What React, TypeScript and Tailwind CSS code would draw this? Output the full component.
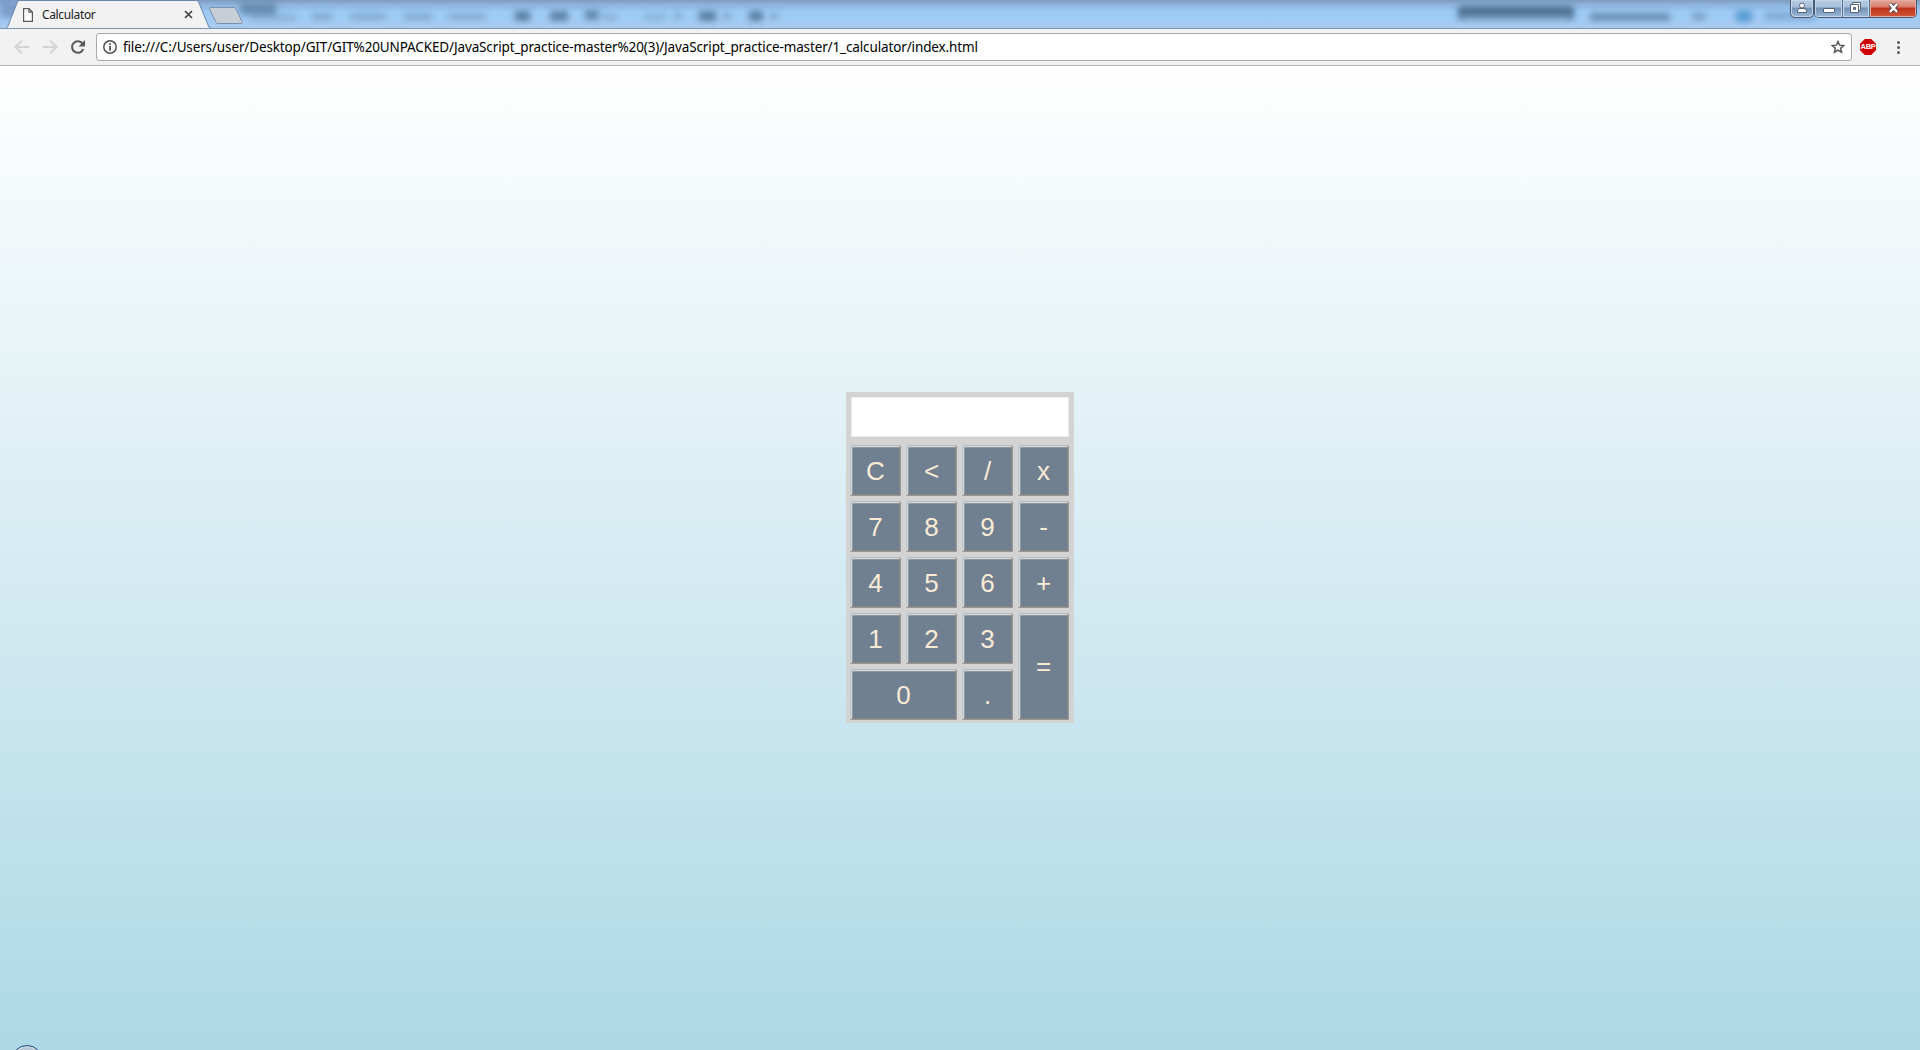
import React from "react";

type Key = { label: string; cls?: string };

const keys: Key[] = [
  { label: "C" }, { label: "<" }, { label: "/" }, { label: "x" },
  { label: "7" }, { label: "8" }, { label: "9" }, { label: "-" },
  { label: "4" }, { label: "5" }, { label: "6" }, { label: "+" },
  { label: "1" }, { label: "2" }, { label: "3" }, { label: "=", cls: "row-span-2 pb-px" },
  { label: "0", cls: "col-span-2 pt-px" }, { label: "." },
];

// Blurred shapes of the window behind the glass title bar: [left, top, width, height, opacity]
const smudges: number[][] = [
  [240, 3, 36, 12, 0.6], [250, 14, 46, 7, 0.25], [312, 13, 20, 7, 0.36], [350, 13, 36, 7, 0.32],
  [404, 13, 28, 7, 0.32], [448, 13, 38, 7, 0.3], [515, 11, 15, 10, 0.8], [550, 11, 18, 10, 0.75],
  [585, 10, 14, 10, 0.7], [603, 14, 14, 6, 0.3], [644, 14, 22, 6, 0.28], [674, 13, 8, 6, 0.35],
  [699, 11, 17, 10, 0.8], [723, 13, 8, 6, 0.4], [749, 11, 14, 10, 0.8], [770, 13, 8, 6, 0.4],
  [1590, 13, 80, 8, 0.65], [1692, 13, 14, 7, 0.45],
];

function TitleBar() {
  return (
    <header className="relative flex h-[29px] overflow-hidden border-b border-[#7896b6] bg-[linear-gradient(#7d9cc0_0px,#8eb4dc_5px,#9ccbf5_12px,#a0cbf5_18px,#a9caf0_28px)]">
      <div className="absolute inset-0 blur-[3px]">
        {smudges.map(([left, top, width, height, opacity], i) => (
          <div key={i} className="absolute bg-[#496b8d]" style={{ left, top, width, height, opacity }} />
        ))}
        <div className="absolute left-[1458px] top-[6px] h-[14px] w-[116px] rounded-sm border-x-4 border-t-8 border-[#4b6b8a] bg-[#6f92b6]" />
        <div className="absolute left-[1735px] top-[10px] h-[12px] w-[18px] rounded-full bg-[#5a9bd0]" />
        <div className="absolute left-[1765px] top-[12px] h-[8px] w-[50px] bg-[#7fa8d4]" />
        <div className="absolute left-0 top-0 h-[18px] w-[20px] bg-[#7d9cca]" />
      </div>
      <svg className="absolute left-0 top-0" width="250" height="29" viewBox="0 0 250 29">
        <path d="M0 28.5H5C7 28.5 7.500 27 8 26L17 3C17.500 1.500 18 0.500 20 0.500H196C198 0.500 198.500 1.500 199 3L208.500 26C209 27.500 210 28.500 212 28.500V29H0Z" fill="#f2f2f2" stroke="#6686ab" />
        <path d="M211 7.500H233C235 7.500 235.600 8.200 236 9L242 21.500C242.700 23 242 23.500 241 23.500H219C217 23.500 216 23 215.500 21.500L209.500 9C209 8 209.500 7.500 211 7.500Z" fill="#c8ced6" stroke="#7790ad" />
      </svg>
      <div className="relative flex h-[29px] w-[210px] items-center pl-[23px]">
        <svg width="10" height="14" viewBox="0 0 10 14" fill="#fff" stroke="#58595b" strokeWidth="1.200">
          <path d="M.6.6H6L9.400 4V13.400H.6ZM5.900.6V4.200H9.400" />
        </svg>
        <span className="ml-[9px] w-[142px] text-[12px] tracking-[-0.35px] text-[#222]">Calculator</span>
        <svg width="9" height="9" viewBox="0 0 9 9" className="shrink-0" stroke="#444" strokeWidth="1.700">
          <path d="M1 1L8 8M8 1L1 8" />
        </svg>
      </div>
      <WindowControls />
    </header>
  );
}

function WindowControls() {
  const glass = "bg-[linear-gradient(#b5cbe3_0px,#a7bfda_7px,#7391b5_8px,#9fb9d6_17px)]";
  return (
    <div className="relative ml-auto mr-[3px] flex h-[18px]">
      <div className={"flex w-[24px] items-center justify-center rounded-b-[5px] border border-t-0 border-[#455a72] shadow-[inset_0_0_0_1px_#c5d7eb] " + glass}>
        <svg width="12" height="12" viewBox="0 0 12 12" className="mb-0.5" fill="#fff" stroke="#52627a">
          <circle cx="6" cy="3.500" r="2.500" />
          <path d="M1.500 10.500V9Q1.500 6.500 4 6.500H8Q10.500 6.500 10.500 9V10.500Z" />
        </svg>
      </div>
      <div className="flex w-[103px] overflow-hidden rounded-b-[5px] border border-t-0 border-[#455a72]">
        <div className={"flex w-[28px] justify-center border-r border-[#566f8d] shadow-[inset_0_0_0_1px_#c5d7eb] " + glass}>
          <div className="mt-[8px] h-[5px] w-[12px] rounded-[1px] border border-[#53647b] bg-white" />
        </div>
        <div className={"flex w-[27px] justify-center border-r border-[#566f8d] pr-[2px] shadow-[inset_0_0_0_1px_#c5d7eb] " + glass}>
          <svg width="13" height="13" viewBox="0 0 13 13" className="mt-px shrink-0" fill="#fff" stroke="#53647b">
            <path d="M3.500 1.500H11.500V9.500H3.500Z" /><path d="M1.500 3.500H9.500V11.500H1.500Z" /><path d="M4.500 6.500H6.500V8.500H4.500Z" fill="#7893b3" />
          </svg>
        </div>
        <div className="flex flex-1 justify-center bg-[linear-gradient(#e5a99c_0px,#d77e6e_7px,#bd321b_8px,#d4593b_17px)] shadow-[inset_0_0_0_1px_#e6aaa0]">
          <svg width="13" height="12" viewBox="0 0 13 12" className="mt-[2px]">
            <path d="M3 2L10 10M10 2L3 10" stroke="#5b4550" strokeWidth="4.400" /><path d="M3 2L10 10M10 2L3 10" stroke="#fff" strokeWidth="2.400" />
          </svg>
        </div>
      </div>
    </div>
  );
}

function Toolbar() {
  return (
    <div className="flex h-[37px] items-start border-b border-[#b4b4b4] bg-[#f2f2f2] pt-[4px]">
      <svg width="96" height="28" viewBox="0 0 96 28" fill="none" className="shrink-0" strokeWidth="2">
        <path d="M29 14H16.500M22 7.500L15.500 14L22 20.500M43 14H55.500M50 7.500L56.500 14L50 20.500" stroke="#d3d3d3" />
        <path d="M82.500 10.500A5.800 5.800 0 1 0 83.300 16" stroke="#5a5a5a" strokeWidth="2.100" />
        <path d="M85 7V13.500H78.500Z" fill="#5a5a5a" />
      </svg>
      <div className="flex h-[28px] w-[1756px] items-center rounded-[3px] border border-[#a9a9a9] bg-white pl-[6px]">
        <svg width="14" height="14" viewBox="0 0 14 14" className="shrink-0" fill="none" stroke="#505050">
          <circle cx="7" cy="7" r="6.200" strokeWidth="1.500" />
          <path d="M7 6V10.800M7 3.200V4.900" strokeWidth="1.800" />
        </svg>
        <span className="ml-[6px] whitespace-nowrap text-[13.500px] tracking-[-0.132px] text-black">
          file:///C:/Users/user/Desktop/GIT/GIT%20UNPACKED/JavaScript_practice-master%20(3)/JavaScript_practice-master/1_calculator/index.html
        </span>
        <svg width="14" height="14" viewBox="0 0 14 14" className="ml-auto mr-[6px] shrink-0" fill="none" stroke="#505050" strokeWidth="1.400">
          <path d="M7 1.400L8.600 5.200L12.800 5.500L9.600 8.200L10.600 12.300L7 10.100L3.400 12.300L4.400 8.200L1.200 5.500L5.400 5.200Z" />
        </svg>
      </div>
      <div className="ml-[8px] mt-[6px] flex size-[16px] items-center justify-center bg-[#d00000] text-center font-['Liberation_Sans'] text-[7.500px] font-bold tracking-[-0.3px] text-white [clip-path:polygon(30%_0,70%_0,100%_30%,100%_70%,70%_100%,30%_100%,0_70%,0_30%)]">
        ABP
      </div>
      <div className="ml-[21px] mt-[8px] flex flex-col gap-[2px]">
        <i className="size-[3px] rounded-full bg-[#5a5a5a]" />
        <i className="size-[3px] rounded-full bg-[#5a5a5a]" />
        <i className="size-[3px] rounded-full bg-[#5a5a5a]" />
      </div>
    </div>
  );
}

function Calculator() {
  return (
    <section className="mx-auto mt-[326px] h-[331px] w-[228px] bg-[#d3d3d3] pl-[4px] pt-[5px] font-['Liberation_Sans',sans-serif]">
      <input readOnly aria-label="Display" className="ml-px block h-[40px] w-[218px] border border-[#ebebeb] bg-white outline-none" />
      <div className="mt-[8px] grid grid-cols-[repeat(4,51px)] grid-rows-[repeat(5,51px)] gap-[5px]">
        {keys.map(({ label, cls }) => (
          <button
            key={label}
            className={"border border-t-[#b9bdc1] border-r-[#96989a] border-b-[#96989a] border-l-[#c3c6c9] bg-[#708090] text-[26px] leading-none text-[#faebd7] shadow-[inset_1px_1px_0_#d3d8dd,inset_-1px_-1px_0_#858585,inset_2px_2px_0_#8c98a4] " + (cls ?? "pt-px")}
          >
            {label}
          </button>
        ))}
      </div>
    </section>
  );
}

export default function App() {
  return (
    <div className="flex h-[1050px] w-[1920px] flex-col overflow-hidden font-['Noto_Sans',sans-serif]">
      <TitleBar />
      <Toolbar />
      <main className="relative flex-1 overflow-hidden bg-[linear-gradient(#fff,#add8e6)]">
        <Calculator />
        <div className="absolute left-[11px] top-[979px] size-[32px] rounded-full border border-[#1c4d80] bg-[#b8c8d8] shadow-[inset_0_0_0_1px_#dbe4ec]" />
      </main>
    </div>
  );
}
